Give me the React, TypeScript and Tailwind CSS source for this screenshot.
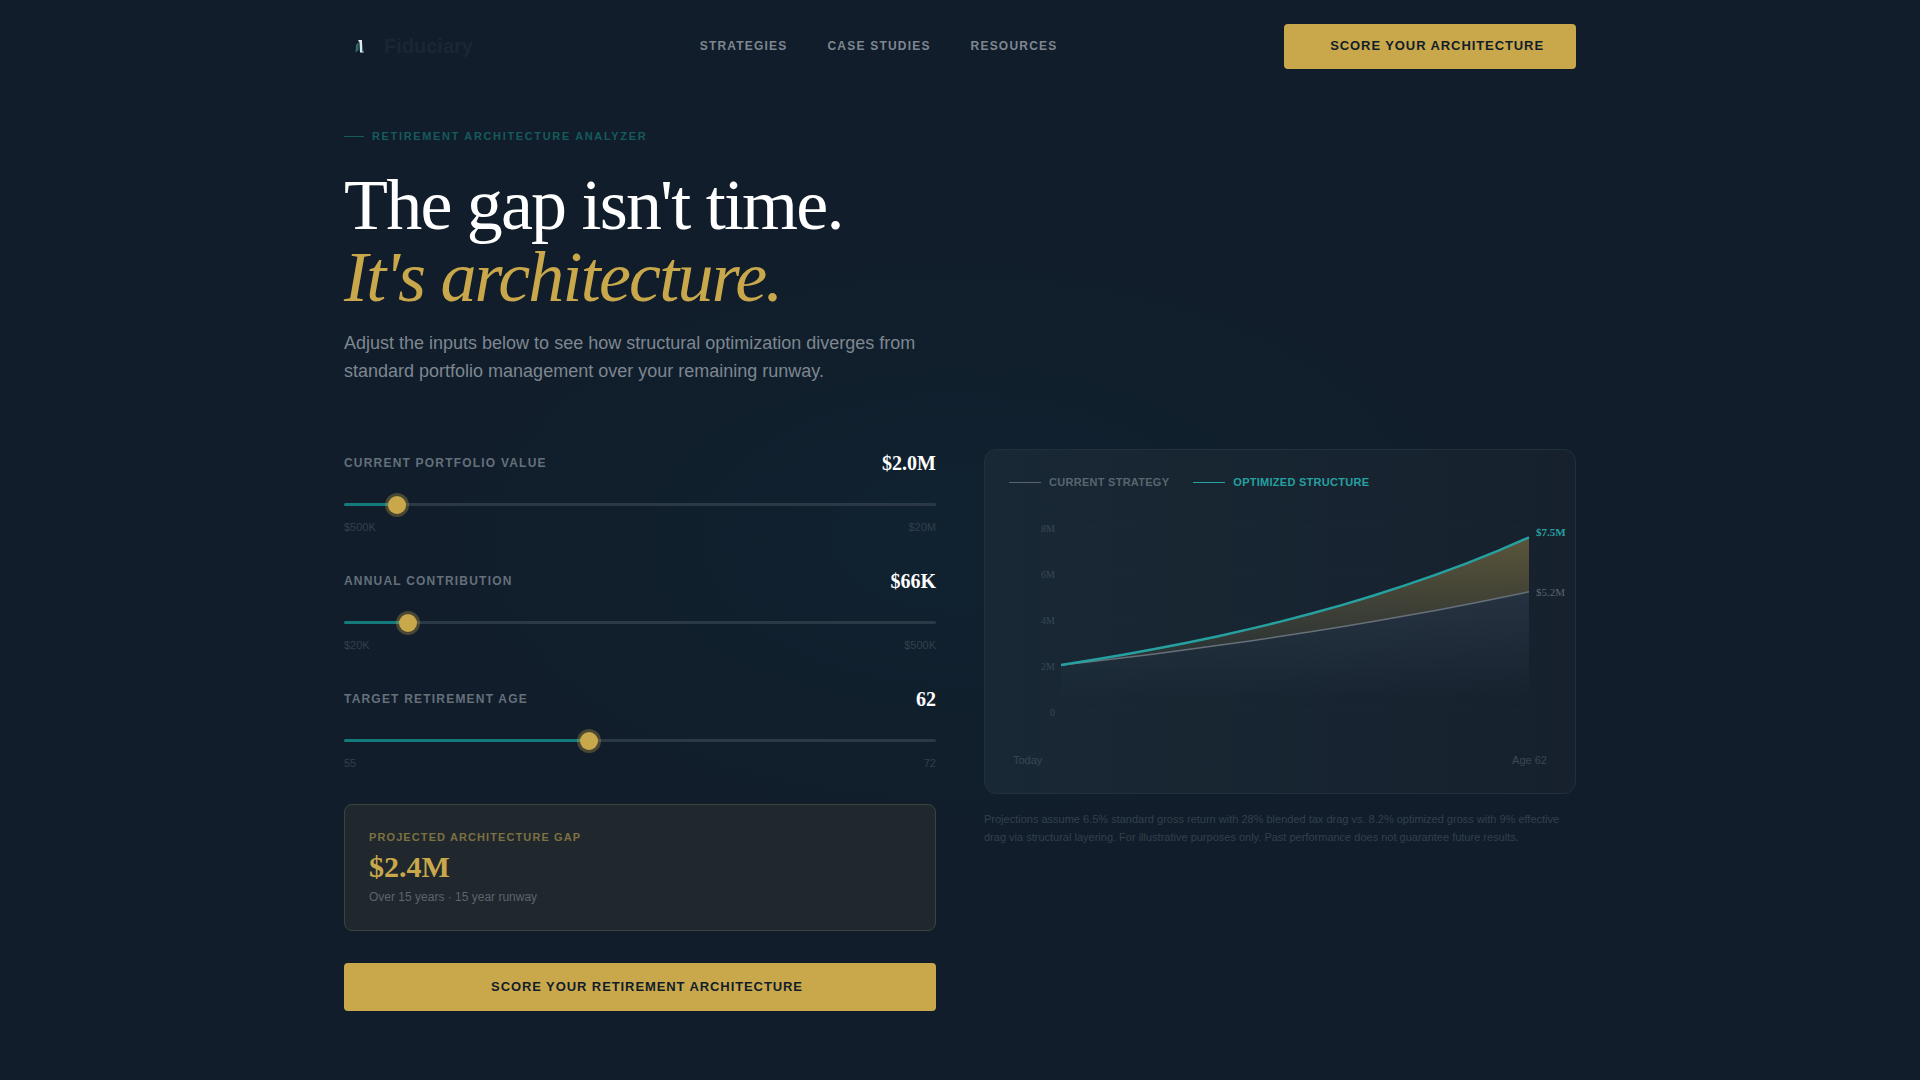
import { useState } from 'react'

interface SliderFieldProps {
  id: string
  label: string
  min: number
  max: number
  step: number
  value: number
  display: string
  minLabel: string
  maxLabel: string
  onChange: (value: number) => void
}

const NAV_LINKS = ['Strategies', 'Case Studies', 'Resources']

// Net annual growth after tax drag and fees
const STANDARD_RATE = 0.0441
const OPTIMIZED_RATE = 0.074
const CURRENT_AGE = 47

const CHART = { left: 52, right: 520, zero: 203, unit: 23 }

function formatMoney(value: number) {
  if (value >= 1_000_000) {
    return `$${(value / 1_000_000).toFixed(1)}M`
  }
  return `$${Math.round(value / 1000)}K`
}

function project(start: number, contribution: number, rate: number, years: number) {
  const values = [start]
  for (let i = 1; i <= years; i++) {
    values.push(values[i - 1] * (1 + rate) + contribution)
  }
  return values
}

function Logo() {
  return (
    <svg className="w-8 h-8" viewBox="0 0 32 32" fill="none" aria-hidden="true">
      <path d="M12 15L14.5 12V20L11.5 22.5Z" fill="#2b6f70" />
      <path d="M14 10H18V20.5L20 22.5H16L15.5 12.5Z" fill="#dfe8ea" />
      <path d="M18 11L19.5 22H18.5Z" fill="#4d8f92" />
    </svg>
  )
}

function SliderField({ id, label, min, max, step, value, display, minLabel, maxLabel, onChange }: SliderFieldProps) {
  const percent = ((value - min) / (max - min)) * 100

  return (
    <div>
      <div className="flex items-center justify-between">
        <label htmlFor={id} className="text-xs font-bold uppercase tracking-[0.1em] text-[#64707c]">
          {label}
        </label>
        <output htmlFor={id} className="font-['Liberation_Serif',serif] text-xl leading-7 font-bold text-white">
          {display}
        </output>
      </div>
      <input
        id={id}
        type="range"
        min={min}
        max={max}
        step={step}
        value={value}
        onChange={(e) => onChange(Number(e.target.value))}
        style={{ backgroundImage: `linear-gradient(to right, #157a7b ${percent}%, #2b3946 ${percent}%)` }}
        className="block w-full h-[3px] mt-[26px] mb-[13px] appearance-none rounded-sm cursor-pointer [&::-webkit-slider-thumb]:appearance-none [&::-webkit-slider-thumb]:w-[18px] [&::-webkit-slider-thumb]:h-[18px] [&::-webkit-slider-thumb]:rounded-full [&::-webkit-slider-thumb]:bg-[#c9a84c] [&::-webkit-slider-thumb]:shadow-[0_0_0_3px_rgba(201,168,76,0.3)]"
      />
      <div className="flex justify-between text-[11px] leading-4 text-[#33404c]">
        <span>{minLabel}</span>
        <span>{maxLabel}</span>
      </div>
    </div>
  )
}

interface ProjectionChartProps {
  standard: number[]
  optimized: number[]
}

function ProjectionChart({ standard, optimized }: ProjectionChartProps) {
  const years = standard.length - 1
  const x = (year: number) => CHART.left + ((CHART.right - CHART.left) * year) / years
  const y = (value: number) => CHART.zero - (value / 1_000_000) * CHART.unit

  const toPoints = (series: number[]) => series.map((v, i) => `${x(i).toFixed(1)},${y(v).toFixed(1)}`)
  const standardPoints = toPoints(standard)
  const optimizedPoints = toPoints(optimized)

  return (
    <svg className="block w-full overflow-visible" viewBox="0 0 542 240" role="img" aria-label="Projected portfolio value">
      <defs>
        <linearGradient id="gapFill" x1="0" y1="0" x2="0" y2="1">
          <stop offset="0" stopColor="#c9a84c" stopOpacity="0.38" />
          <stop offset="1" stopColor="#c9a84c" stopOpacity="0.08" />
        </linearGradient>
        <linearGradient id="baseFill" x1="0" y1="0" x2="0" y2="1">
          <stop offset="0" stopColor="#64748b" stopOpacity="0.2" />
          <stop offset="0.9" stopColor="#64748b" stopOpacity="0" />
        </linearGradient>
      </defs>
      {[8, 6, 4, 2, 0].map((tick) => (
        <g key={tick}>
          <line
            x1={CHART.left}
            x2={CHART.right}
            y1={y(tick * 1_000_000)}
            y2={y(tick * 1_000_000)}
            stroke="#ffffff"
            strokeOpacity="0.015"
          />
          <text
            x="46"
            y={y(tick * 1_000_000) + 5}
            textAnchor="end"
            className="font-['Liberation_Serif',serif] text-[10px] fill-[#3b4853]"
          >
            {tick === 0 ? '0' : `${tick}M`}
          </text>
        </g>
      ))}
      <polygon
        points={[...standardPoints, `${CHART.right},${CHART.zero}`, `${CHART.left},${CHART.zero}`].join(' ')}
        fill="url(#baseFill)"
      />
      <polygon points={[...optimizedPoints, ...[...standardPoints].reverse()].join(' ')} fill="url(#gapFill)" />
      <polyline points={standardPoints.join(' ')} fill="none" stroke="#66707a" strokeWidth="1.5" />
      <polyline points={optimizedPoints.join(' ')} fill="none" stroke="#26a0a1" strokeWidth="2.5" />
      <text
        x="527"
        y={y(optimized[years]) - 1}
        className="font-['Liberation_Serif',serif] text-[11px] font-bold fill-[#26a0a1]"
      >
        {formatMoney(optimized[years])}
      </text>
      <text x="527" y={y(standard[years]) + 4} className="font-['Liberation_Serif',serif] text-[11px] fill-[#59646f]">
        {formatMoney(standard[years])}
      </text>
    </svg>
  )
}

export default function App() {
  const [portfolio, setPortfolio] = useState(2_000_000)
  const [contribution, setContribution] = useState(66_000)
  const [age, setAge] = useState(62)

  const years = age - CURRENT_AGE
  const standard = project(portfolio, contribution, STANDARD_RATE, years)
  const optimized = project(portfolio, contribution, OPTIMIZED_RATE, years)
  const gap = optimized[years] - standard[years]

  return (
    <div className="min-h-screen bg-[#111d2a] bg-[radial-gradient(ellipse_at_50%_50%,#102230_0%,#111d2a_38%)] font-['Liberation_Sans',Arial,sans-serif]">
      {/* Header */}
      <header className="max-w-[1280px] mx-auto px-6 pt-6 flex items-start justify-between">
        <a href="#" className="h-11 flex items-center gap-2 text-xl font-bold text-[#1a2733]">
          <Logo />
          Fiduciary
        </a>
        <nav className="h-11 flex items-center gap-10">
          {NAV_LINKS.map((link) => (
            <a key={link} href="#" className="text-xs font-bold uppercase tracking-[0.1em] text-[#7e8791]">
              {link}
            </a>
          ))}
        </nav>
        <button className="h-[45px] pl-[46px] pr-8 pb-px rounded bg-[#c9a84c] text-[13px] leading-4 font-bold uppercase tracking-[0.07em] text-[#111d2a]">
          Score your architecture
        </button>
      </header>

      <main className="max-w-[1280px] mx-auto px-6 pt-[59px] pb-16">
        {/* Intro */}
        <div className="flex items-center gap-2 text-[11px] leading-4 font-bold uppercase tracking-[0.15em] text-[#155b5d]">
          <span className="w-5 h-px bg-[#155b5d]" />
          Retirement Architecture Analyzer
        </div>
        <h1 className="mt-[25px] font-['Liberation_Serif',serif] text-7xl leading-none tracking-[-0.025em] text-white">
          <span className="block">The gap isn't time.</span>
          <em className="block text-[#c9a84c]">It's architecture.</em>
        </h1>
        <p className="mt-4 max-w-[600px] text-lg leading-7 text-[#7e8791]">
          Adjust the inputs below to see how structural optimization diverges from standard portfolio management over
          your remaining runway.
        </p>

        <div className="mt-16 grid grid-cols-2 gap-12 items-start">
          {/* Inputs */}
          <div>
            <div className="flex flex-col gap-8">
              <SliderField
                id="portfolio"
                label="Current Portfolio Value"
                min={500_000}
                max={20_000_000}
                step={100_000}
                value={portfolio}
                display={formatMoney(portfolio)}
                minLabel="$500K"
                maxLabel="$20M"
                onChange={setPortfolio}
              />
              <SliderField
                id="contribution"
                label="Annual Contribution"
                min={20_000}
                max={500_000}
                step={1_000}
                value={contribution}
                display={formatMoney(contribution)}
                minLabel="$20K"
                maxLabel="$500K"
                onChange={setContribution}
              />
              <SliderField
                id="age"
                label="Target Retirement Age"
                min={55}
                max={72}
                step={1}
                value={age}
                display={String(age)}
                minLabel="55"
                maxLabel="72"
                onChange={setAge}
              />
            </div>

            {/* Result */}
            <div className="mt-[33px] px-6 pt-6 pb-[25px] rounded-lg border border-[#39453f] bg-[#20272d]">
              <p className="text-[11px] leading-4 font-bold uppercase tracking-[0.1em] text-[#7b7142]">
                Projected Architecture Gap
              </p>
              <p className="mt-1 font-['Liberation_Serif',serif] text-3xl leading-9 font-bold text-[#c9a84c]">
                {formatMoney(gap)}
              </p>
              <p className="mt-1 text-xs leading-4 text-[#5c656e]">
                Over {years} years · {years} year runway
              </p>
            </div>

            <button className="mt-8 w-full h-12 pl-[14px] rounded bg-[#c9a84c] text-[13px] font-bold uppercase tracking-[0.07em] text-[#111d2a]">
              Score your retirement architecture
            </button>
          </div>

          {/* Chart */}
          <div>
            <div className="px-6 pt-6 pb-[25px] rounded-xl border border-[#20303c] bg-[linear-gradient(to_right,#182834,#17212e)]">
              <div className="flex gap-6 text-[11px] leading-4 font-bold uppercase tracking-wide">
                <span className="flex items-center gap-2 text-[#59656f]">
                  <span className="w-8 h-px bg-[#59656f]" />
                  Current Strategy
                </span>
                <span className="flex items-center gap-2 text-[#26a0a1]">
                  <span className="w-8 h-px bg-[#26a0a1]" />
                  Optimized Structure
                </span>
              </div>
              <div className="mt-[18px]">
                <ProjectionChart standard={standard} optimized={optimized} />
              </div>
              <div className="mt-1 flex justify-between px-1 text-[11px] leading-4 text-[#3b4853]">
                <span>Today</span>
                <span>Age {age}</span>
              </div>
            </div>
            <p className="mt-4 text-[11px] leading-[18px] text-[#33404c]">
              Projections assume 6.5% standard gross return with 28% blended tax drag vs. 8.2% optimized gross with 9%
              effective drag via structural layering. For illustrative purposes only. Past performance does not
              guarantee future results.
            </p>
          </div>
        </div>
      </main>
    </div>
  )
}
